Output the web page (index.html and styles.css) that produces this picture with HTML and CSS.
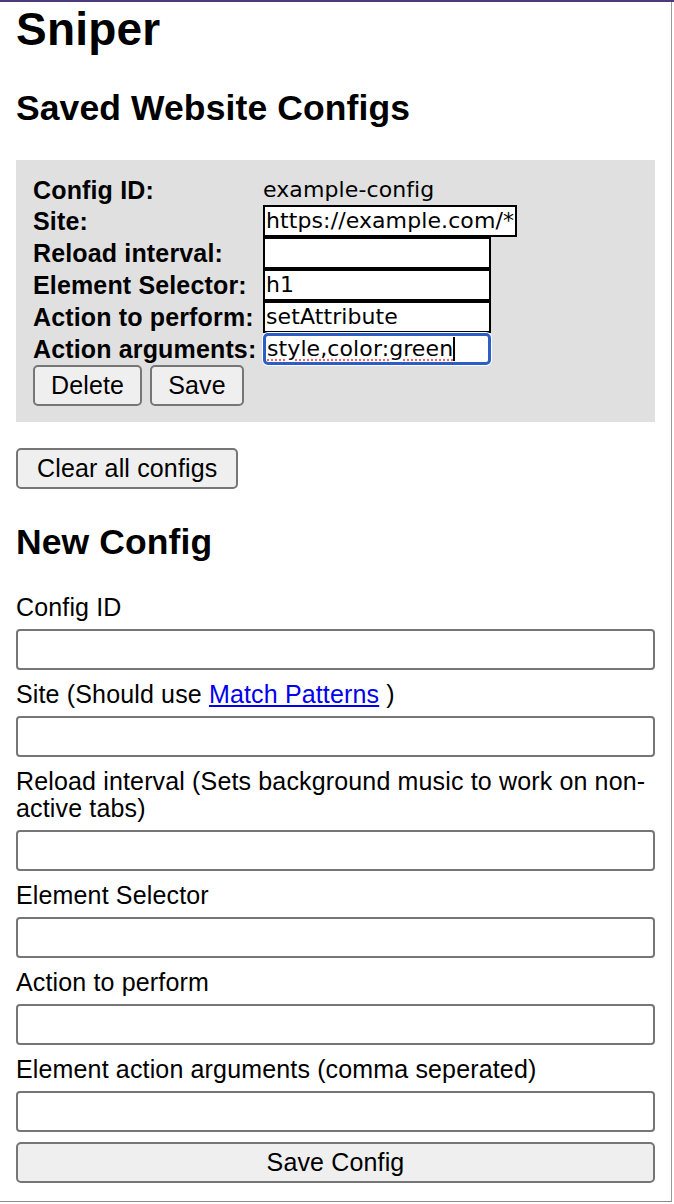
FILE: index.html
```html
<!DOCTYPE html>
<html lang="en">
<head>
<meta charset="utf-8">
<title>Sniper</title>
<link rel="stylesheet" href="styles.css">
</head>
<body>
<div class="frame">
  <h1 class="title">Sniper</h1>
  <h2 class="section-title">Saved Website Configs</h2>
  <div class="config-card">
    <div class="config-grid">
      <div class="cfg-label">Config ID:</div>
      <div class="cfg-value">example-config</div>
      <div class="cfg-label">Site:</div>
      <div class="cfg-value"><span class="cfg-box">https://example.com/*</span></div>
      <div class="cfg-label">Reload interval:</div>
      <div class="cfg-value"><span class="cfg-box"></span></div>
      <div class="cfg-label">Element Selector:</div>
      <div class="cfg-value"><span class="cfg-box">h1</span></div>
      <div class="cfg-label">Action to perform:</div>
      <div class="cfg-value"><span class="cfg-box">setAttribute</span></div>
      <div class="cfg-label">Action arguments:</div>
      <div class="cfg-value"><span class="cfg-box cfg-focused"><span class="spell">style,color:green</span><span class="caret"></span></span></div>
    </div>
    <div class="card-actions">
      <button class="btn" type="button">Delete</button>
      <button class="btn" type="button">Save</button>
    </div>
  </div>
  <button class="btn btn-clear" type="button">Clear all configs</button>
  <h2 class="section-title new-title">New Config</h2>
  <form class="new-form">
    <label class="field-label">Config ID</label>
    <input class="field-input" type="text">
    <label class="field-label">Site (Should use <a href="#" class="link">Match Patterns</a> )</label>
    <input class="field-input" type="text">
    <label class="field-label">Reload interval (Sets background music to work on non-active tabs)</label>
    <input class="field-input" type="text">
    <label class="field-label">Element Selector</label>
    <input class="field-input" type="text">
    <label class="field-label">Action to perform</label>
    <input class="field-input" type="text">
    <label class="field-label">Element action arguments (comma seperated)</label>
    <input class="field-input" type="text">
    <button class="btn btn-full" type="button">Save Config</button>
  </form>
</div>
</body>
</html>
```
FILE: styles.css
```css
html {
  background: #fff;
}

body {
  margin: 0;
  border-top: 2px solid #4b3b7a;
  font-family: "Liberation Sans", Arial, Helvetica, sans-serif;
  font-size: 25px;
  letter-spacing: 0.15px;
  color: #000;
  background: #fff;
}

.frame {
  width: 672px;
  height: 1200px;
  box-sizing: border-box;
  padding: 0 16px;
  border-right: 1px solid #9a9a9a;
  border-bottom: 1px solid #8a8a8a;
  overflow: hidden;
}

.title {
  margin: 2px 0 0;
  font-size: 46px;
  line-height: 50px;
  font-weight: 700;
  letter-spacing: 0.2px;
}

.section-title {
  margin: 34px 0 32px;
  font-size: 35.5px;
  line-height: 40px;
  font-weight: 700;
  letter-spacing: 0.1px;
}

.new-title {
  margin: 33px 0 32px;
}

.config-card {
  background: #e0e0e0;
  padding: 15px 17px 16px;
}

.config-grid {
  display: grid;
  grid-template-columns: 230px auto;
  grid-template-rows: 30px;
  grid-auto-rows: 32px;
  align-items: center;
  justify-items: start;
}

.cfg-label {
  font-weight: 700;
  line-height: 28px;
  white-space: nowrap;
}

.cfg-value {
  font-family: "DejaVu Sans", Verdana, sans-serif;
  font-size: 22px;
  letter-spacing: 0.1px;
  line-height: 28px;
}

.cfg-box {
  display: block;
  box-sizing: border-box;
  height: 32px;
  min-width: 228px;
  border: 2px solid #000;
  background: #fff;
  padding: 0 1px;
  line-height: 28px;
  white-space: nowrap;
}

.cfg-focused {
  border: 3px solid #2b5fc6;
  border-radius: 5px;
  box-shadow: 0 0 0 1px #fff;
  line-height: 26px;
  padding: 0 0 0 1px;
}

.spell {
  text-decoration: underline dotted #e36b6b;
  text-underline-offset: 3px;
}

.caret {
  display: inline-block;
  width: 2px;
  height: 24px;
  background: #000;
  vertical-align: -5px;
}

.card-actions {
  display: flex;
  gap: 8px;
}

.btn {
  font-family: "Liberation Sans", Arial, Helvetica, sans-serif;
  font-size: 25px;
  letter-spacing: 0.15px;
  color: #000;
  height: 41px;
  padding: 0 16px;
  background: #efefef;
  border: 2px solid #767676;
  border-radius: 5px;
  box-sizing: border-box;
}

.btn-clear {
  display: block;
  margin-top: 26px;
  padding: 0 19px;
}

.new-form {
  display: block;
}

.field-label {
  display: block;
  line-height: 27px;
}

.link {
  color: #0000ee;
  text-decoration: underline;
}

.field-input {
  display: block;
  width: 100%;
  box-sizing: border-box;
  height: 41px;
  margin: 8px 0 11px;
  border: 2px solid #767676;
  border-radius: 4px;
  background: #fff;
  font: inherit;
  padding: 0 6px;
}

.btn-full {
  display: block;
  width: 100%;
  margin-top: -1px;
}
```
